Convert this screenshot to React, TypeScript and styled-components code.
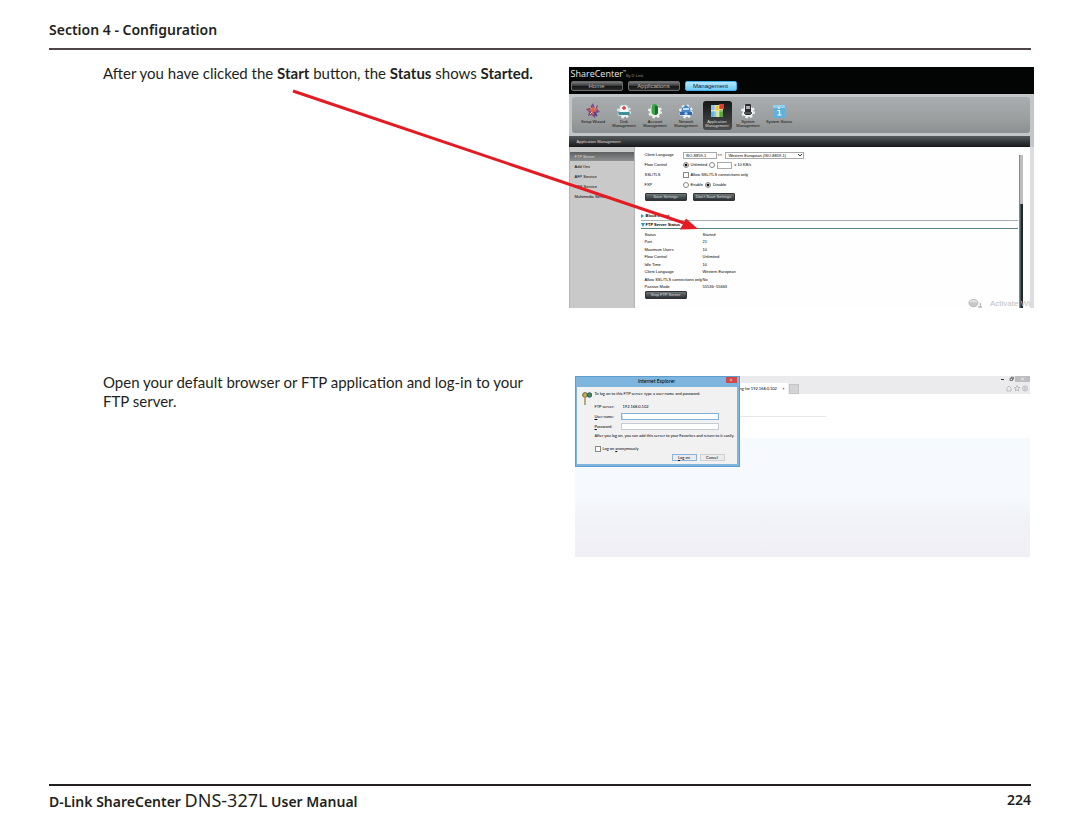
import React from "react";
import styled, { createGlobalStyle } from "styled-components";

const Global = createGlobalStyle`
  * { box-sizing: border-box; }
  body { margin: 0; background: #fff; color: #231f20; font-family: "Noto Sans", "Open Sans", sans-serif; }
  button, input, select { font-family: inherit; margin: 0; padding: 0; }
  p, h1, h2, h3, figure, ul { margin: 0; padding: 0; }
`;

const Page = styled.div`
  min-height: 100vh;
  display: flex;
  flex-direction: column;
  padding: 0 49px;
`;

const PageHeader = styled.header`
  height: 50px;
  padding-top: 20px;
  border-bottom: 2px solid #4d4546;
`;

const PageTitle = styled.h1`
  font-size: 14px;
  line-height: 20px;
  font-weight: 600;
`;

const Steps = styled.main`
  flex: 1;
  padding: 17px 0 0 54px;
  margin-right: -3px;
  display: flex;
  flex-direction: column;
  gap: 68px;
`;

const Step = styled.section`
  display: grid;
  grid-template-columns: minmax(0, 1fr) minmax(0, 1fr);
`;

const StepText = styled.p`
  font-family: Lato, sans-serif;
  font-size: 15px;
  line-height: 19px;
  padding-right: 24px;
  margin-top: -3px;
`;

const Figure = styled.figure<{ $inset?: boolean }>`
  position: relative;
  font-family: "Liberation Sans", sans-serif;
  font-size: 4px;
  line-height: 4px;
  color: #000;
  margin: ${(p) => (p.$inset ? "0 4px 0 6px" : "0")};
`;

const Pointer = styled.svg`
  position: absolute;
  left: -277px;
  top: 20px;
  pointer-events: none;
`;

const PageFooter = styled.footer`
  height: 50px;
  border-top: 2px solid #231f20;
  display: flex;
  justify-content: space-between;
  font-size: 14px;
  line-height: 28px;
  font-weight: 600;
`;

const Model = styled.span`
  font-size: 18px;
  font-weight: 400;
`;

/* ShareCenter admin panel */

const Panel = styled.div`
  height: 241px;
  display: flex;
  flex-direction: column;
  background: #c3c6c8;
  overflow: hidden;
`;

const PanelTop = styled.div`
  height: 27px;
  background: #020504;
  padding: 2px 2px 0;
`;

const Brand = styled.div`
  height: 12px;
  font: 9px/10px "Open Sans", sans-serif;
  color: #e8e8e8;
  small { font-size: 4px; color: #999; }
  sup { font-size: 4px; line-height: 0; }
`;

const TabRow = styled.nav`
  display: flex;
  gap: 5px;
`;

const TabButton = styled.button<{ $active?: boolean }>`
  width: 52px;
  height: 10px;
  border: 1px solid ${(p) => (p.$active ? "#3fb4ee" : "#6c6c6c")};
  border-radius: 2px;
  background: ${(p) =>
    p.$active
      ? "linear-gradient(#b5e6fd, #6fcbf8)"
      : "linear-gradient(#77797a, #3b3b3c 45%, #151515 50%, #2b2b2b)"};
  color: ${(p) => (p.$active ? "#123" : "#b9b9b9")};
  font-size: 6px;
  line-height: 8px;
`;

const ToolShelf = styled.nav`
  height: 36px;
  margin: 3px 4px 3px 3px;
  padding: 4px 7px 0;
  display: flex;
  gap: 2px;
  border-radius: 3px;
  background: linear-gradient(#a8acae, #9b9fa0 60%, #8b8f8f);
`;

const Tool = styled.button<{ $active?: boolean }>`
  width: 29px;
  height: 29px;
  flex: none;
  display: flex;
  flex-direction: column;
  align-items: center;
  border: 0;
  border-radius: 3px;
  background: ${(p) => (p.$active ? "linear-gradient(#161616, #4d4f50)" : "none")};
  color: ${(p) => (p.$active ? "#ddd" : "#111")};
  font-size: 4px;
  line-height: 4px;
  svg { flex: none; margin: 2px 0 1px; }
`;

const PanelHeading = styled.h2`
  height: 11px;
  flex: none;
  margin-right: 4px;
  padding-left: 8px;
  background: linear-gradient(#555b5e, #17181a);
  color: #ddd;
  font-size: 4px;
  line-height: 11px;
  font-weight: 400;
`;

const PanelBody = styled.div`
  flex: 1;
  display: flex;
  background: #fefefe;
  border-right: 4px solid #dcdde0;
`;

const SideMenu = styled.ul`
  width: 66px;
  flex: none;
  padding-top: 5px;
  background: #c9c9c9;
  border-left: 1px solid #b4b4b4;
  border-right: 1px solid #b4b4b4;
  list-style: none;
`;

const SideLink = styled.a<{ $active?: boolean }>`
  display: block;
  height: 9px;
  margin-bottom: 1px;
  padding-left: 5px;
  line-height: 9px;
  text-decoration: none;
  color: ${(p) => (p.$active ? "#ddd" : "#000")};
  background: ${(p) => (p.$active ? "linear-gradient(#5d5f60, #8d8f90)" : "none")};
`;

const Content = styled.div`
  flex: 1;
  position: relative;
  padding: 3px 4px 0 6px;
`;

const Settings = styled.form`
  padding-left: 4px;
`;

const Setting = styled.div`
  height: 10px;
  display: flex;
  align-items: center;
`;

const SettingName = styled.label`
  width: 38px;
`;

const Choice = styled.label`
  display: flex;
  align-items: center;
  gap: 2px;
  margin-right: 2px;
`;

const Tick = styled.input`
  appearance: none;
  flex: none;
  width: 6px;
  height: 6px;
  border: 1px solid #888;
  background: #fff;
  &[type="radio"] { border-radius: 50%; }
  &[type="radio"]:checked { background: radial-gradient(#111 45%, #fff 60%); }
`;

const PickerBox = styled.span<{ $w: number }>`
  position: relative;
  display: flex;
  width: ${(p) => p.$w}px;
  svg { position: absolute; right: 2px; top: 2px; pointer-events: none; }
`;

const Picker = styled.select`
  appearance: none;
  width: 100%;
  height: 7px;
  padding-left: 2px;
  border: 1px solid #aaa;
  border-radius: 0;
  background: #fff;
  color: #000;
  font-size: 4px;
  line-height: 5px;
`;

const SmallField = styled.input`
  width: 15px;
  height: 7px;
  border: 1px solid #aaa;
  font-size: 4px;
`;

const Buttons = styled.div`
  display: flex;
  gap: 6px;
  padding-top: 3px;
`;

const DarkButton = styled.button`
  width: 42px;
  height: 8px;
  border: 1px solid #333;
  border-radius: 1px;
  background: linear-gradient(#6d7679, #2b3135);
  color: #d6dbdd;
  font-size: 4px;
  line-height: 6px;
`;

const SectionTitle = styled.h3<{ $first?: boolean }>`
  height: ${(p) => (p.$first ? 10 : 8)}px;
  margin: ${(p) => (p.$first ? 10 : 0)}px 8px 0 0;
  display: flex;
  align-items: center;
  border-bottom: ${(p) => (p.$first ? "1px solid #a9aeb6" : "1px solid #5d8284")};
  font-size: 4px;
  line-height: 4px;
  font-weight: 700;
  svg { flex: none; margin-right: 1px; }
`;

const StatusTable = styled.table`
  height: 60px;
  margin: 2px 0 0 4px;
  border-collapse: collapse;
  th, td { padding: 0; text-align: left; font-weight: 400; font-size: 4px; line-height: 4px; }
  th { width: 58px; }
`;

const StopRow = styled.div`
  padding-left: 4px;
  display: flex;
`;

const ScrollTrack = styled.div`
  position: absolute;
  right: 7px;
  top: 8px;
  bottom: 0;
  width: 4px;
  background: linear-gradient(90deg, #6f8f8d 1px, #23272c 2px);
`;

const ScrollThumb = styled.div`
  height: 49px;
  border-left: 1px solid #888;
  background: #bdbdbd;
`;

const Watermark = styled.div`
  position: absolute;
  right: 0;
  bottom: 0;
  display: flex;
  align-items: center;
  gap: 8px;
  color: #c2c2c2;
  font-size: 8px;
  line-height: 8px;
`;

/* Browser window with the log-on dialog */

const Browser = styled.div`
  height: 181px;
  background: linear-gradient(#fff 62px, #f5fafe 62px, #f6f9fd 120px, #f1f3f9 140px, #f0eff5 181px);
`;

const BrowserBar = styled.div`
  height: 18px;
  padding-left: 165px;
  display: flex;
  justify-content: space-between;
  background: #ebebee;
`;

const BrowserTabs = styled.div`
  display: flex;
  align-items: flex-end;
  gap: 1px;
`;

const BrowserTab = styled.div`
  width: 48px;
  height: 11px;
  padding-right: 3px;
  display: flex;
  justify-content: space-between;
  background: #fff;
  font-family: Lato, sans-serif;
  line-height: 11px;
`;

const NewTab = styled.button`
  width: 10px;
  height: 10px;
  border: 1px solid #c4c4c6;
  background: #d4d4d6;
`;

const FaintRule = styled.div`
  width: 86px;
  margin: 22px 0 0 165px;
  border-top: 1px solid #e6e6e6;
`;

const Dialog = styled.form`
  position: absolute;
  left: 0;
  top: 0;
  width: 165px;
  height: 91px;
  padding: 0 2px 2px 1px;
  display: flex;
  flex-direction: column;
  border: 1px solid #5f9fce;
  background: #7db5de;
  font-family: Lato, sans-serif;
`;

const DialogTitle = styled.div`
  height: 10px;
  padding-left: 11px;
  display: flex;
  align-items: flex-start;
  line-height: 9px;
  h2 { flex: 1; text-align: center; font-size: 5px; font-weight: 400; }
`;

const CloseButton = styled.button`
  width: 11px;
  height: 6px;
  border: 0;
  background: #cf4b4b;
  color: #fff;
  font-size: 5px;
  line-height: 6px;
`;

const DialogBody = styled.div`
  flex: 1;
  padding: 5px 12px 0 5px;
  display: grid;
  grid-template-columns: 10px minmax(0, 1fr);
  column-gap: 3px;
  background: #f1f1f2;
`;

const Fields = styled.div`
  display: flex;
  flex-direction: column;
  white-space: nowrap;
`;

const Line = styled.div<{ $h: number }>`
  height: ${(p) => p.$h}px;
  display: flex;
  align-items: flex-start;
`;

const FieldName = styled.label<{ $wide?: boolean }>`
  width: ${(p) => (p.$wide ? 28 : 26)}px;
  line-height: ${(p) => (p.$wide ? 4 : 7)}px;
`;

const Field = styled.input<{ $focus?: boolean }>`
  width: 98px;
  height: 7px;
  border: 1px solid ${(p) => (p.$focus ? "#7fb2dd" : "#c4ccd4")};
  background: #fff;
  font-size: 4px;
`;

const DialogButtons = styled.div`
  display: flex;
  justify-content: flex-end;
  gap: 3px;
`;

const DialogButton = styled.button<{ $primary?: boolean }>`
  width: 25px;
  height: 7px;
  border: 1px solid ${(p) => (p.$primary ? "#8ab4dc" : "#d0d0d0")};
  background: #ececee;
  font-size: 4px;
  line-height: 5px;
`;

const Gear = () => (
  <circle cx="8" cy="8.5" r="5.5" fill="#eef1f2" stroke="#eef1f2" strokeWidth="3" strokeDasharray="2.2 2.1" />
);

const toolArt: Record<string, React.ReactNode> = {
  wizard: (
    <>
      <path d="M8 0l1.500 4L13 2l-1 4 3 3-3.500 1L10 15l-3.500-3L3 13l1-4-3-3 3.500-1z" fill="#7d4a8c" />
      <path d="M8 3l1.500 3 3-1-2 4-3 3-2-4-3-1 4-1z" fill="#d9654c" />
      <path d="M5 4l1.500 2M11 3L9.500 6M5 11l2-2" stroke="#f0c27c" strokeWidth="1" />
      <path d="M9 9l3 4" stroke="#4a3d86" strokeWidth="1.4" />
    </>
  ),
  disk: (
    <>
      <Gear />
      <path d="M3 6l2-4h6l2 4v5H3z" fill="#f3f8f8" stroke="#8ab0b4" strokeWidth=".6" />
      <path d="M2.500 9h11v3h-11z" fill="#3f8f96" />
      <path d="M8 3v4M6 5h4" stroke="#e0342c" strokeWidth="1.3" />
    </>
  ),
  account: (
    <>
      <Gear />
      <path d="M4.500 4c0-4 6.500-4 6.500 0v5c0 4-6.500 4-6.500 0z" fill="#3aa544" />
      <path d="M8 3c3-1 3 1 3 6 0 3-3 3-3 3z" fill="#1d6a2c" />
    </>
  ),
  network: (
    <>
      <Gear />
      <path d="M3 10l1-5 4-3 4 3 1 5z" fill="#4a86cc" />
      <path d="M5 5h6v2H5z" fill="#bfe0fa" />
      <path d="M2 9h12v3H2z" fill="#2f66ae" />
      <circle cx="8" cy="10.5" r="1.6" fill="#9accf2" />
    </>
  ),
  application: (
    <>
      <path d="M2 2h12v12H2z" fill="#cfe3a4" />
      <path d="M2 2h4v5H2z" fill="#8fc0e8" />
      <path d="M6 3h4v5H6z" fill="#f2c92f" />
      <path d="M10 1h5v5h-5z" fill="#e33b2e" />
      <path d="M2 8h5v6H2z" fill="#5fb6e6" />
      <path d="M10 7h4v7h-4z" fill="#5da83a" />
      <path d="M6 2v12M10 2v12M2 8h12" stroke="#fff" strokeWidth=".5" />
    </>
  ),
  system: (
    <>
      <Gear />
      <rect x="5" y="1" width="6" height="11" rx="1" fill="#2b2b2d" />
      <rect x="6" y="3" width="4" height="3" fill="#a8b0b4" />
      <path d="M4 9h8v2H4z" fill="#555" />
    </>
  ),
  status: (
    <>
      <rect x="2" y="2" width="12" height="13" fill="#5fb1e0" />
      <rect x="2" y="2" width="12" height="3" fill="#8fd0f0" />
      <path d="M8 4v2M6.500 7.500H8.500V12M6.500 12h4" stroke="#fff" strokeWidth="1.2" fill="none" />
    </>
  ),
};

const tools = [
  { id: "wizard", label: ["Setup Wizard"] },
  { id: "disk", label: ["Disk", "Management"] },
  { id: "account", label: ["Account", "Management"] },
  { id: "network", label: ["Network", "Management"] },
  { id: "application", label: ["Application", "Management"] },
  { id: "system", label: ["System", "Management"] },
  { id: "status", label: ["System Status"] },
];

const services = ["FTP Server", "Add Ons", "AFP Service", "NFS Service", "Multimedia Services"];

const status = [
  ["Status", "Started"],
  ["Port", "21"],
  ["Maximum Users", "10"],
  ["Flow Control", "Unlimited"],
  ["Idle Time", "10"],
  ["Client Language", "Western European"],
  ["Allow SSL/TLS connections only", "No"],
  ["Passive Mode", "55536~55663"],
];

function AdminPanel() {
  return (
    <Panel>
      <PanelTop>
        <Brand>
          ShareCenter<sup>™</sup>
          <small>By D-Link</small>
        </Brand>
        <TabRow>
          <TabButton>Home</TabButton>
          <TabButton>Applications</TabButton>
          <TabButton $active>Management</TabButton>
        </TabRow>
      </PanelTop>
      <ToolShelf>
        {tools.map((t) => (
          <Tool key={t.id} $active={t.id === "application"}>
            <svg width="16" height="16" viewBox="0 0 16 16">{toolArt[t.id]}</svg>
            {t.label.map((word) => <span key={word}>{word}</span>)}
          </Tool>
        ))}
      </ToolShelf>
      <PanelHeading>Application Management</PanelHeading>
      <PanelBody>
        <SideMenu>
          {services.map((s, i) => (
            <li key={s}><SideLink href="#" $active={i === 0}>{s}</SideLink></li>
          ))}
        </SideMenu>
        <Content>
          <Settings>
            <Setting>
              <SettingName htmlFor="charset">Client Language</SettingName>
              <PickerBox $w={34}><Picker id="charset"><option>ISO-8859-1</option></Picker></PickerBox>
              <Choice as="span">&nbsp;&lt;&lt;&nbsp;</Choice>
              <PickerBox $w={79}>
                <Picker aria-label="Language"><option>Western European (ISO-8859-1)</option></Picker>
                <svg width="4" height="3" viewBox="0 0 4 3"><path d="M0 0l2 2 2-2" stroke="#333" fill="none" /></svg>
              </PickerBox>
            </Setting>
            <Setting>
              <SettingName as="span">Flow Control</SettingName>
              <Choice><Tick type="radio" name="flow" defaultChecked />Unlimited</Choice>
              <Choice><Tick type="radio" name="flow" /><SmallField aria-label="Rate" /> x 10 KB/s</Choice>
            </Setting>
            <Setting>
              <SettingName as="span">SSL/TLS</SettingName>
              <Choice><Tick type="checkbox" />Allow SSL/TLS connections only</Choice>
            </Setting>
            <Setting>
              <SettingName as="span">FXP</SettingName>
              <Choice><Tick type="radio" name="fxp" />Enable</Choice>
              <Choice><Tick type="radio" name="fxp" defaultChecked />Disable</Choice>
            </Setting>
            <Buttons>
              <DarkButton type="button">Save Settings</DarkButton>
              <DarkButton type="button">Don't Save Settings</DarkButton>
            </Buttons>
          </Settings>
          <SectionTitle $first>
            <svg width="4" height="4" viewBox="0 0 4 4"><path d="M0 0l3 2-3 2z" fill="#1a9fd0" /></svg>
            Block IP List
          </SectionTitle>
          <SectionTitle>
            <svg width="4" height="4" viewBox="0 0 4 4"><path d="M0 0h4l-2 4z" fill="#1a9fd0" /></svg>
            FTP Server Status
          </SectionTitle>
          <StatusTable>
            <tbody>
              {status.map(([name, value]) => (
                <tr key={name}><th scope="row">{name}</th><td>{value}</td></tr>
              ))}
            </tbody>
          </StatusTable>
          <StopRow><DarkButton type="button">Stop FTP Server</DarkButton></StopRow>
          <ScrollTrack><ScrollThumb /></ScrollTrack>
          <Watermark>
            <svg width="14" height="9" viewBox="0 0 14 9" fill="none" stroke="#b9b9b9">
              <path d="M1 4a4.500 3.500 0 019 0z" fill="#e4e4e4" />
              <path d="M1 4c0 5 9 5 9 0" fill="#c9c9c9" />
              <path d="M12.500 4v4M10 8h4" strokeWidth="1.300" />
            </svg>
            Activate Wi
          </Watermark>
        </Content>
      </PanelBody>
    </Panel>
  );
}

function LogOnWindow() {
  return (
    <>
      <Browser>
        <BrowserBar>
          <BrowserTabs>
            <BrowserTab><span>ng for 192.168.0.102</span><span>×</span></BrowserTab>
            <NewTab aria-label="New tab" />
          </BrowserTabs>
          <svg width="32" height="18" viewBox="0 0 32 18" fill="none">
            <path d="M3 3.500h3" stroke="#333" />
            <path d="M12 2.500h2.500v2H12zM13 2v-.8h2.500v2H15" stroke="#444" strokeWidth=".7" />
            <path d="M17 0h15v6H17z" fill="#bdbdbf" />
            <path d="M23 1.500l3 3M26 1.500l-3 3" stroke="#e8e8e8" />
            <g stroke="#a9a9ad" strokeWidth=".7">
              <path d="M8.500 12.500L11 10l2.500 2.500M9 12.500V15h4v-2.500" />
              <path d="M19 9.500l.8 2 2 .1-1.500 1.400.5 2-1.800-1.100L17.200 15l.5-2-1.500-1.400 2-.1z" />
              <circle cx="27" cy="12.500" r="2.500" />
              <circle cx="27" cy="12.500" r="1" />
            </g>
          </svg>
        </BrowserBar>
        <FaintRule />
      </Browser>
      <Dialog>
        <DialogTitle>
          <h2>Internet Explorer</h2>
          <CloseButton type="button" aria-label="Close">×</CloseButton>
        </DialogTitle>
        <DialogBody>
          <svg width="10" height="14" viewBox="0 0 10 14">
            <circle cx="3" cy="3" r="2.400" fill="#c9b14a" stroke="#6a6a4a" />
            <circle cx="7.500" cy="3" r="2.300" fill="#3b8a62" stroke="#20486a" strokeWidth=".8" />
            <path d="M3 5v8" stroke="#a99a5a" strokeWidth="1.600" />
          </svg>
          <Fields>
            <Line $h={13}>To log on to this FTP server, type a user name and password.</Line>
            <Line $h={8}><FieldName as="span" $wide>FTP server:</FieldName>192.168.0.102</Line>
            <Line $h={10}><FieldName htmlFor="user"><u>U</u>ser name:</FieldName><Field id="user" $focus defaultValue="|" /></Line>
            <Line $h={11}><FieldName htmlFor="pass"><u>P</u>assword:</FieldName><Field id="pass" /></Line>
            <Line $h={12}>After you log on, you can add this server to your Favorites and return to it easily.</Line>
            <Line $h={8}><Choice><Tick type="checkbox" /><span>Log on <u>a</u>nonymously</span></Choice></Line>
            <DialogButtons>
              <DialogButton type="button" $primary><u>L</u>og on</DialogButton>
              <DialogButton type="button">Cancel</DialogButton>
            </DialogButtons>
          </Fields>
        </DialogBody>
      </Dialog>
    </>
  );
}

export default function App() {
  return (
    <>
      <Global />
      <Page>
        <PageHeader><PageTitle>Section 4 - Configuration</PageTitle></PageHeader>
        <Steps>
          <Step>
            <StepText>
              After you have clicked the <b>Start</b> button, the <b>Status</b> shows <b>Started.</b>
            </StepText>
            <Figure>
              <AdminPanel />
              <Pointer width="410" height="146" viewBox="0 0 410 146">
                <path d="M1 4L392 136" stroke="#e31b23" strokeWidth="3" />
                <path d="M406 142L388 142.500 394 131.500z" fill="#e31b23" />
              </Pointer>
            </Figure>
          </Step>
          <Step>
            <StepText>Open your default browser or FTP application and log-in to your FTP server.</StepText>
            <Figure $inset><LogOnWindow /></Figure>
          </Step>
        </Steps>
        <PageFooter>
          <span>D-Link ShareCenter <Model>DNS-327L</Model> User Manual</span>
          <span>224</span>
        </PageFooter>
      </Page>
    </>
  );
}
